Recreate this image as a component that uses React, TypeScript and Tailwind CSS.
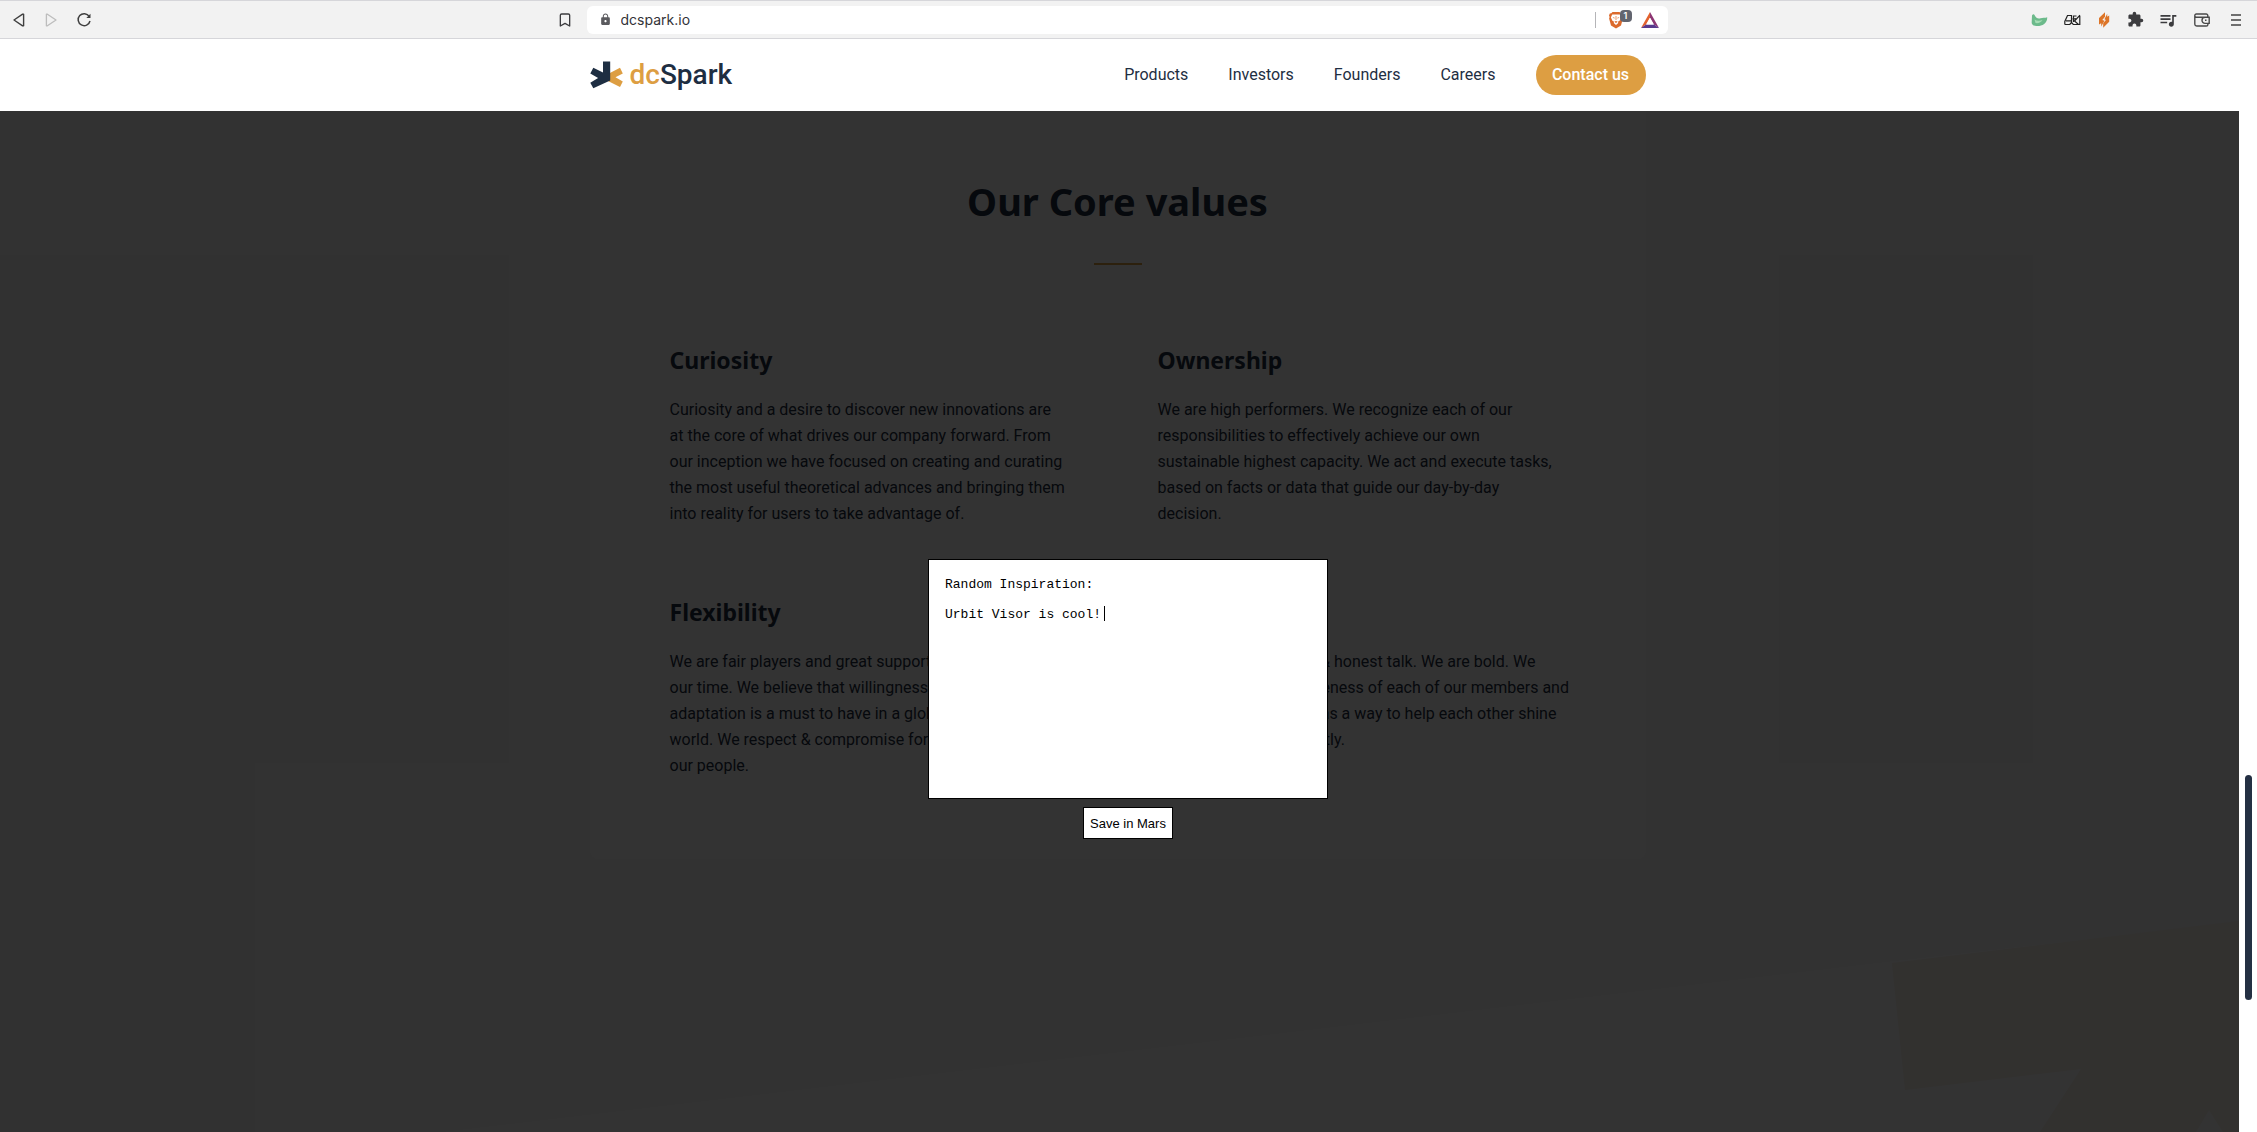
import React from "react";
import { Bookmark } from "lucide-react";
import { MdLock, MdExtension, MdQueueMusic } from "react-icons/md";

const NAV = ["Products", "Investors", "Founders", "Careers"];

const VALUES: { title: string; lines: string[] }[] = [
  {
    title: "Curiosity",
    lines: [
      "Curiosity and a desire to discover new innovations are",
      "at the core of what drives our company forward. From",
      "our inception we have focused on creating and curating",
      "the most useful theoretical advances and bringing them",
      "into reality for users to take advantage of.",
    ],
  },
  {
    title: "Ownership",
    lines: [
      "We are high performers. We recognize each of our",
      "responsibilities to effectively achieve our own",
      "sustainable highest capacity. We act and execute tasks,",
      "based on facts or data that guide our day-by-day",
      "decision.",
    ],
  },
  {
    title: "Flexibility",
    lines: [
      "We are fair players and great supporters of",
      "our time. We believe that willingness and",
      "adaptation is a must to have in a globalized",
      "world. We respect & compromise for all of",
      "our people.",
    ],
  },
  {
    title: "Honesty",
    lines: [
      "We are fans of upfront & honest talk. We are bold. We",
      "acknowledge the uniqueness of each of our members and",
      "and also see feedback as a way to help each other shine",
      "and to improve constantly.",
    ],
  },
];

function BrowserBar() {
  return (
    <div className="flex h-[39px] shrink-0 items-center border-t border-b border-[#d6d6da] bg-[#f2f2f2] pl-3 text-[#3c3c3f]">
      <div className="flex flex-1 items-center">
        <div className="flex items-center gap-[18px]">
          <button aria-label="Back">
            <svg width="14" height="14" viewBox="0 0 14 14" fill="none" stroke="#3f3f3f" strokeWidth="1.4" strokeLinejoin="round">
              <path d="M11.6 1.2v11.6h-1L2 7l8.600-5.800z" />
            </svg>
          </button>
          <button aria-label="Forward">
            <svg width="14" height="14" viewBox="0 0 14 14" fill="none" stroke="#bdbdbd" strokeWidth="1.300" strokeLinejoin="round">
              <path d="M2.400 1.200v11.600h1L12 7 3.400 1.200z" />
            </svg>
          </button>
          <button aria-label="Reload">
            <svg width="16" height="16" viewBox="0 0 16 16" fill="none" stroke="#3f3f3f" strokeWidth="1.500">
              <path d="M13.200 4.400A6 6 0 1 0 14 9" />
              <path d="M14.500 1.800v4.200h-4.200z" fill="#3f3f3f" stroke="none" />
            </svg>
          </button>
        </div>
        <button aria-label="Bookmark this page" className="mr-[14px] ml-auto">
          <Bookmark size={16} strokeWidth={2} />
        </button>
      </div>
      <div className="flex h-7 w-[1081px] items-center rounded-md bg-white pl-3">
        <MdLock size={13} color="#5a5a5e" />
        <input
          aria-label="Address"
          defaultValue="dcspark.io"
          className="ml-[9px] min-w-0 flex-1 bg-transparent font-['Inter',sans-serif] text-sm text-[#333338] outline-none"
        />
        <span className="h-4 w-px bg-[#b5b5b8]" />
        <button aria-label="Brave Shields" className="relative ml-3">
          <svg width="16" height="18" viewBox="0 0 16 18">
            <path d="M4.500 1h7l1.200 1.300 1.500.2.800 2-.6 1.500.5 1.500-1.900 7L8 17.500l-5-3-1.900-7 .5-1.500L1 4.500l.8-2 1.500-.2z" fill="#dc6a2c" />
            <path d="M4.200 3.600h7.600l1.300 2.900-1.500 3.300-1.700 1 .4 1.200L8 14l-2.300-2 .4-1.200-1.700-1L2.900 6.500z" fill="#fff" />
            <path d="M4.600 6l2 .7-.4 1zM11.400 6l-2 .7.400 1zM6.300 10.700L8 10l1.700.7L8 12z" fill="#dc6a2c" />
            <path d="M8 5v4" stroke="#dc6a2c" strokeWidth=".7" />
          </svg>
          <span className="absolute -top-px left-3 flex h-3 w-3 items-center justify-center rounded bg-[#62656f] font-['Inter',sans-serif] text-[9px] font-semibold text-white">
            1
          </span>
        </button>
        <button aria-label="Brave Rewards" className="mr-[9px] ml-[17px]">
          <svg width="18" height="16" viewBox="0 0 18 16">
            <path d="M9 0L0 16l5-3.400L9 5.500z" fill="#e2622f" />
            <path d="M9 0l9 16-5-3.400L9 5.500z" fill="#8d3673" />
            <path d="M0 16h18l-5-3.400H5z" fill="#58398d" />
            <path d="M9 6l3.700 6.500H5.300z" fill="#fff" />
          </svg>
        </button>
      </div>
      <div className="flex flex-1 items-center justify-end gap-4 pr-[15px]">
        <button aria-label="Dragon extension">
          <svg width="17" height="14" viewBox="0 0 17 14">
            <path d="M1 2.500C2 .8 3 .8 3.800 2.500 5 5 7 6 9.500 5.200 11.500 4.500 14 5 16.200 4.200c.2 3-1 5.300-3 6.800-2.700 2-6.200 2.300-9.200 1.800C1.500 12.300.5 11 .7 9z" fill="#6cba8b" />
            <path d="M3.500 6.500c2.500 1.500 5 1.500 8 .5-1 2.500-4.500 3.500-7 3z" fill="#a5dcb4" />
          </svg>
        </button>
        <button aria-label="Glasses extension">
          <svg width="17" height="12" viewBox="0 0 17 12" fill="none" stroke="#222" strokeWidth="1.200">
            <path d="M.8 10.500V7.500L3.500 1.500h4V8M2 6.800h5.500M.8 10.500h5l1.700-2 1.800 2h6.500V2M9.500 8V2h3M8.500 4.800h3.500M16 1.200L10.500 7l4 3.500" />
          </svg>
        </button>
        <button aria-label="Bolt extension">
          <svg width="14" height="16" viewBox="0 0 14 16" fill="#dd7528">
            <path d="M8 .2v4.600L5.300 8l2.200.8-3.300 5.700v-3.300L2 12.600V6z" />
            <path d="M10.200 1.800v3l2-1.300v6.300l-6 6v-4.600L8.900 8l-1.500-.8z" />
          </svg>
        </button>
        <button aria-label="Extensions">
          <MdExtension size={17} />
        </button>
        <button aria-label="Media control" className="-ml-[2px]">
          <MdQueueMusic size={20} />
        </button>
        <button aria-label="Wallet">
          <svg width="16" height="14" viewBox="0 0 16 14" fill="none" stroke="#4a4a4a" strokeWidth="1.400">
            <path d="M13.800 4.500V2.600A1.600 1.600 0 0 0 12.200 1H2.300A1.500 1.500 0 0 0 .8 2.500v8.700A1.900 1.900 0 0 0 2.700 13h9.600a1.600 1.600 0 0 0 1.600-1.600v-.9M.8 2.700c0 1 .7 1.500 1.500 1.500h12.900v6.200h-4.100a3 3 0 0 1 0-6.200" />
            <path d="M11 7.300h1.500" />
          </svg>
        </button>
        <button aria-label="Menu" className="ml-1">
          <svg width="12" height="14" viewBox="0 0 12 14" stroke="#444" strokeWidth="1.500">
            <path d="M1 2h10M1 7h10M1 12h10" />
          </svg>
        </button>
      </div>
    </div>
  );
}

function SiteHeader() {
  return (
    <header className="h-18 shrink-0 bg-white pr-[22px] pb-px">
      <div className="mx-auto flex h-full max-w-[1056px] items-center">
        <a href="#home" className="flex items-center gap-[6px]">
          <svg width="34" height="28" viewBox="0 0 34 28">
            <path d="M18 13L30 6.800l2.800 5.700-7.300 3.700 7.300 4.200-2.800 5.700L18 20z" fill="#dd9e42" />
            <path d="M13 .5h7.200v19L3.300 27.300.3 21.700l7.800-4.700L.3 12.500l3-5.700 9.700 4.700z" fill="#1e2e42" />
          </svg>
          <span className="font-['Roboto',sans-serif] text-[28px] leading-8 font-medium text-[#1e2e42]">
            <span className="text-[#dd9e42]">dc</span>Spark
          </span>
        </a>
        <nav className="ml-auto flex items-center gap-10 font-['Roboto',sans-serif] text-base text-[#1e2e42]">
          {NAV.map((label) => (
            <a key={label} href={"#" + label.toLowerCase()}>
              {label}
            </a>
          ))}
          <a href="#contact" className="flex h-10 w-[110px] items-center justify-center rounded-full bg-[#dd9e42] font-medium whitespace-nowrap text-white">
            Contact us
          </a>
        </nav>
      </div>
    </header>
  );
}

function CoreValues() {
  return (
    <div className="relative pr-1">
      <section className="mx-auto max-w-[1056px] rounded-b-lg bg-white px-20 pt-[60px] pb-20 text-[#1e2e42]">
        <h2 className="text-center font-['Noto_Sans',sans-serif] text-[38px] leading-[60px] font-bold">Our Core values</h2>
        <hr className="mx-auto mt-8 w-12 border-t-2 border-[#dd9e42]" />
        <div className="mt-[77px] grid grid-cols-2 gap-x-20 gap-y-[67px]">
          {VALUES.map((value) => (
            <article key={value.title}>
              <h3 className="font-['Noto_Sans',sans-serif] text-[23px] leading-9 font-bold">{value.title}</h3>
              <p className="mt-[19px] font-['Roboto',sans-serif] text-base leading-[26px] whitespace-nowrap">
                {value.lines.map((line) => (
                  <span key={line} className="block">
                    {line}
                  </span>
                ))}
              </p>
            </article>
          ))}
        </div>
      </section>
    </div>
  );
}

function Backdrop() {
  return (
    <svg className="absolute right-0 bottom-0" width="1800" height="220" viewBox="0 0 1800 220" aria-hidden="true">
      <path d="M0 220L1453 49 1800 10V220z" fill="#fdfdfd" />
      <path d="M1453 51L1800 9V220H1601L1642 157 1466 178z" fill="#faf3ea" />
      <path d="M1757 220l13-22 14 22z" fill="#fdfdfd" />
    </svg>
  );
}

function NoteDialog() {
  return (
    <form className="absolute inset-x-0 top-[448px] flex flex-col items-center gap-2 pr-px" onSubmit={(e) => e.preventDefault()}>
      <div className="relative">
        <textarea
          aria-label="Note"
          defaultValue={"Random Inspiration:\n\nUrbit Visor is cool!"}
          className="block h-60 w-[400px] resize-none border border-black bg-white px-4 pt-[17px] pb-4 font-['Liberation_Mono',monospace] text-[13px] leading-[15px] text-black outline-none"
        />
        <span className="absolute top-[47px] left-[176px] h-[15px] w-px bg-black" />
      </div>
      <button className="h-8 w-[90px] border border-black bg-white pt-px font-['Liberation_Sans',sans-serif] text-[13px] whitespace-nowrap text-black">
        Save in Mars
      </button>
    </form>
  );
}

export default function App() {
  return (
    <div className="flex h-screen flex-col overflow-hidden bg-white">
      <BrowserBar />
      <SiteHeader />
      <div className="relative flex min-h-0 flex-1">
        <main className="relative min-w-0 flex-1 overflow-hidden bg-[#f7f7f7]">
          <Backdrop />
          <CoreValues />
          <div className="absolute inset-0 bg-black/80" />
        </main>
        <div className="w-[18px] shrink-0 bg-white pt-[664px] pl-[6px]">
          <div className="h-[225px] w-[7px] rounded-full bg-[#243043]" />
        </div>
        <NoteDialog />
      </div>
    </div>
  );
}
